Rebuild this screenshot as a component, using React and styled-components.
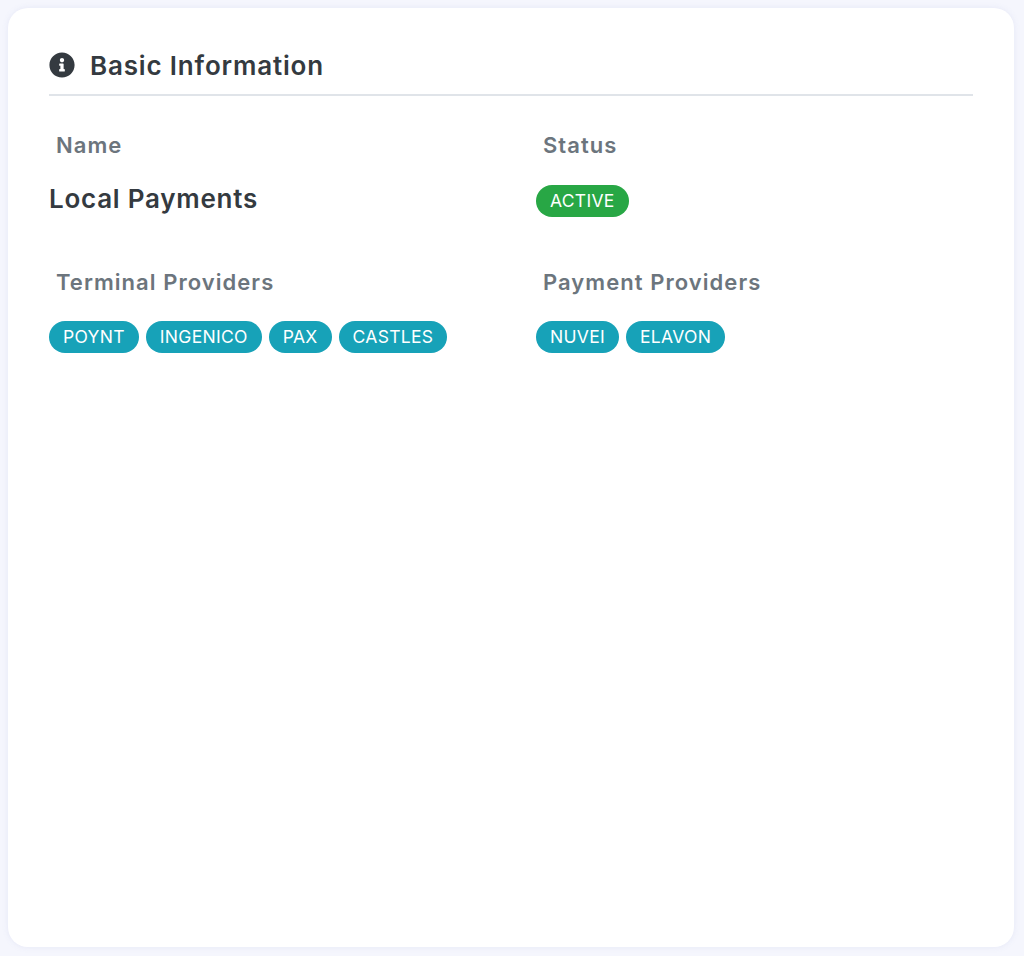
import React from "react";
import styled, { createGlobalStyle } from "styled-components";
import { FaInfoCircle } from "react-icons/fa";

const GlobalStyle = createGlobalStyle`
  html, body {
    margin: 0;
    background: #f5f6fd;
    font-family: Inter, "Open Sans", "Liberation Sans", sans-serif;
  }
`;

const Page = styled.div`
  box-sizing: border-box;
  height: 956px;
  padding: 8px 10px 9px 8px;
`;

const Card = styled.section`
  box-sizing: border-box;
  height: 100%;
  padding: 42px 41px 0 41px;
  background: #fff;
  border-radius: 20px;
  box-shadow: 0 0 6px rgba(120, 130, 200, 0.12);
`;

const Header = styled.header`
  display: flex;
  align-items: center;
  gap: 15px;
  height: 29px;
  padding-bottom: 15px;
  border-bottom: 2px solid #e0e4e9;
  color: #343a40;
  svg {
    font-size: 26px;
  }
`;

const Title = styled.h2`
  margin: 0;
  padding-top: 2px;
  font-size: 26px;
  font-weight: 600;
  letter-spacing: 0.83px;
`;

const Fields = styled.div`
  display: grid;
  grid-template-columns: 487px 1fr;
  grid-auto-rows: 136.5px;
  padding-top: 35px;
`;

const Field = styled.div`
  display: flex;
  flex-direction: column;
  align-items: flex-start;
`;

const Label = styled.div`
  height: 28px;
  margin-bottom: 12px;
  padding-left: 7px;
  line-height: 28px;
  font-size: 22px;
  font-weight: 600;
  letter-spacing: 1.05px;
  color: #6c757d;
`;

const Value = styled.div`
  margin-top: 10px;
  font-size: 26px;
  line-height: 36px;
  font-weight: 600;
  letter-spacing: 0.75px;
  color: #343a40;
`;

const Pills = styled.div`
  display: flex;
  gap: 7px;
  margin-top: 13.75px;
`;

const Pill = styled.span`
  display: block;
  height: 32px;
  padding: 0 14px;
  line-height: 32px;
  border-radius: 16px;
  font-size: 17.5px;
  font-weight: 400;
  letter-spacing: 0.3px;
  color: #fff;
  background: ${(p) => (p.$status ? "#28a745" : "#17a2b8")};
`;

const terminals = ["POYNT", "INGENICO", "PAX", "CASTLES"];
const payments = ["NUVEI", "ELAVON"];

export default function App() {
  return (
    <>
      <GlobalStyle />
      <Page>
        <Card>
          <Header>
            <FaInfoCircle />
            <Title>Basic Information</Title>
          </Header>
          <Fields>
            <Field>
              <Label>Name</Label>
              <Value>Local Payments</Value>
            </Field>
            <Field>
              <Label>Status</Label>
              <Pills>
                <Pill $status>ACTIVE</Pill>
              </Pills>
            </Field>
            <Field>
              <Label>Terminal Providers</Label>
              <Pills>
                {terminals.map((t) => (
                  <Pill key={t}>{t}</Pill>
                ))}
              </Pills>
            </Field>
            <Field>
              <Label>Payment Providers</Label>
              <Pills>
                {payments.map((t) => (
                  <Pill key={t}>{t}</Pill>
                ))}
              </Pills>
            </Field>
          </Fields>
        </Card>
      </Page>
    </>
  );
}
